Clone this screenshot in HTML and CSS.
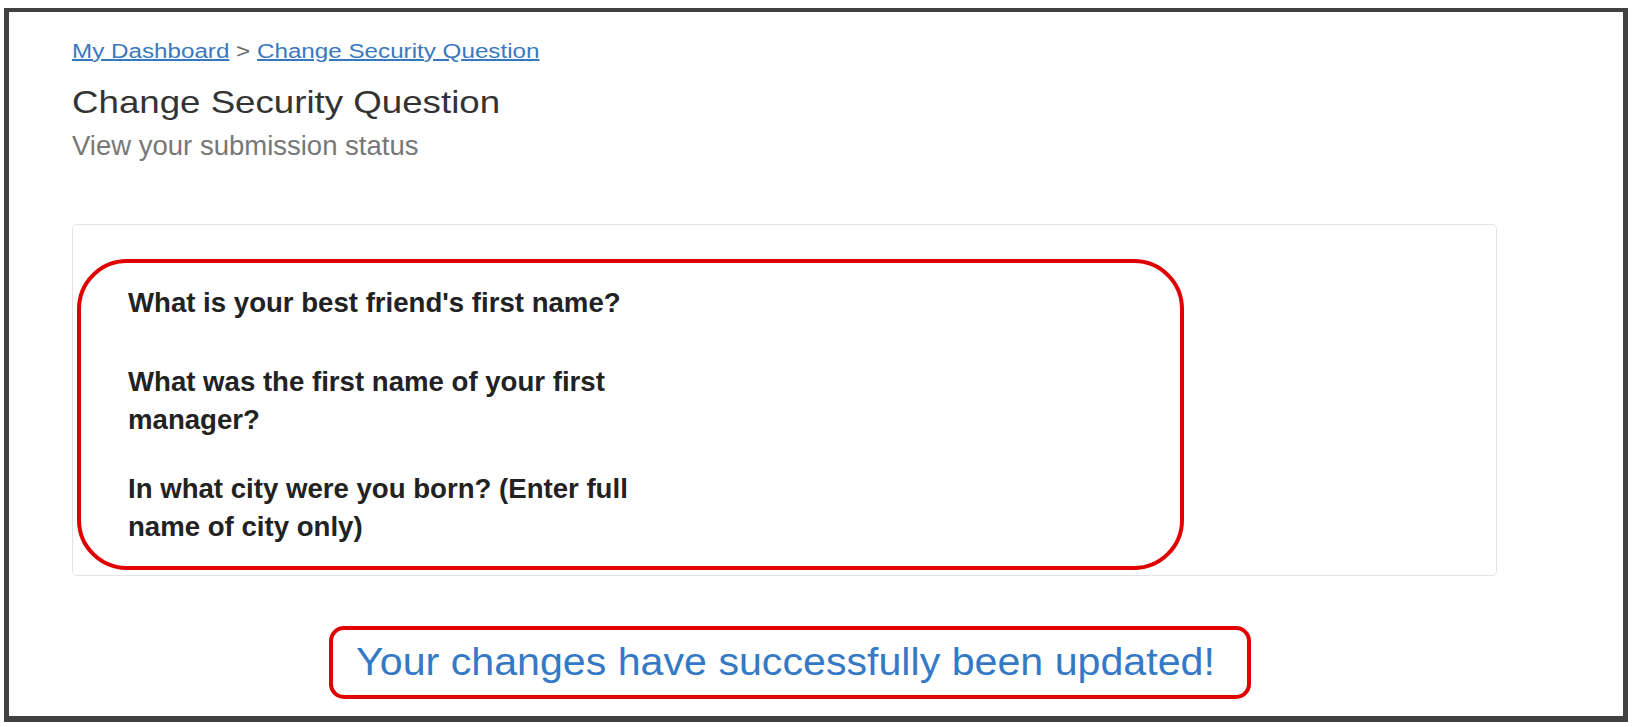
FILE: index.html
```html
<!DOCTYPE html>
<html lang="en">
<head>
<meta charset="utf-8">
<title>Change Security Question</title>
<link rel="stylesheet" href="styles.css">
</head>
<body>
<div class="frame">
  <nav class="crumbs"><span class="crumb-text"><a href="#">My Dashboard</a> &gt; <a href="#">Change Security Question</a></span></nav>
  <h1 class="title"><span class="title-text">Change Security Question</span></h1>
  <p class="subtitle">View your submission status</p>
  <div class="card">
    <div class="highlight">
      <p class="q q1">What is your best friend's first name?</p>
      <p class="q q2">What was the first name of your first<br>manager?</p>
      <p class="q">In what city were you born? (Enter full<br>name of city only)</p>
    </div>
  </div>
  <div class="status-row">
    <div class="status-box"><span class="status-text">Your changes have successfully been updated!</span></div>
  </div>
</div>
</body>
</html>
```
FILE: styles.css
```css
html, body {
  margin: 0;
  background: #ffffff;
}
body {
  font-family: "Liberation Sans", Arial, sans-serif;
}
.frame {
  box-sizing: border-box;
  margin: 8px 0 0 4px;
  width: 1624px;
  height: 714px;
  border-style: solid;
  border-color: #414141;
  border-width: 4px 5px 6px 5px;
  padding: 27px 0 0 63px;
  overflow: hidden;
}
.crumbs {
  font-size: 20px;
  line-height: 24px;
  color: #666666;
}
.crumb-text {
  display: inline-block;
  transform: scaleX(1.21);
  transform-origin: 0 50%;
}
.crumbs a {
  color: #3a78be;
  text-decoration: underline;
}
.title {
  margin: 19px 0 0;
  font-size: 32px;
  line-height: 40px;
  font-weight: normal;
  color: #333333;
}
.title-text {
  display: inline-block;
  transform: scaleX(1.146);
  transform-origin: 0 50%;
}
.subtitle {
  margin: 8px 0 0;
  font-size: 27.5px;
  line-height: 32px;
  color: #777777;
}
.card {
  box-sizing: border-box;
  margin-top: 62px;
  width: 1425px;
  border: 1px solid #e3e3e3;
  border-radius: 5px;
  padding: 34px 0 5px 4px;
}
.highlight {
  box-sizing: border-box;
  width: 1107px;
  height: 311px;
  border: 4px solid #e10000;
  border-radius: 50px;
  padding: 21px 0 0 47px;
}
.q {
  margin: 0;
  font-size: 27.6px;
  line-height: 38px;
  font-weight: bold;
  color: #222222;
}
.q1 {
  margin-bottom: 41px;
}
.q2 {
  margin-bottom: 31px;
}
.status-row {
  margin-top: 50px;
  padding-left: 257px;
}
.status-box {
  box-sizing: border-box;
  width: 922px;
  height: 73px;
  border: 4px solid #e10000;
  border-radius: 15px;
  padding-right: 9px;
  text-align: center;
  font-size: 38px;
  line-height: 65px;
  color: #3479c5;
}
.status-text {
  display: inline-block;
  transform: scaleX(1.083);
}
```
